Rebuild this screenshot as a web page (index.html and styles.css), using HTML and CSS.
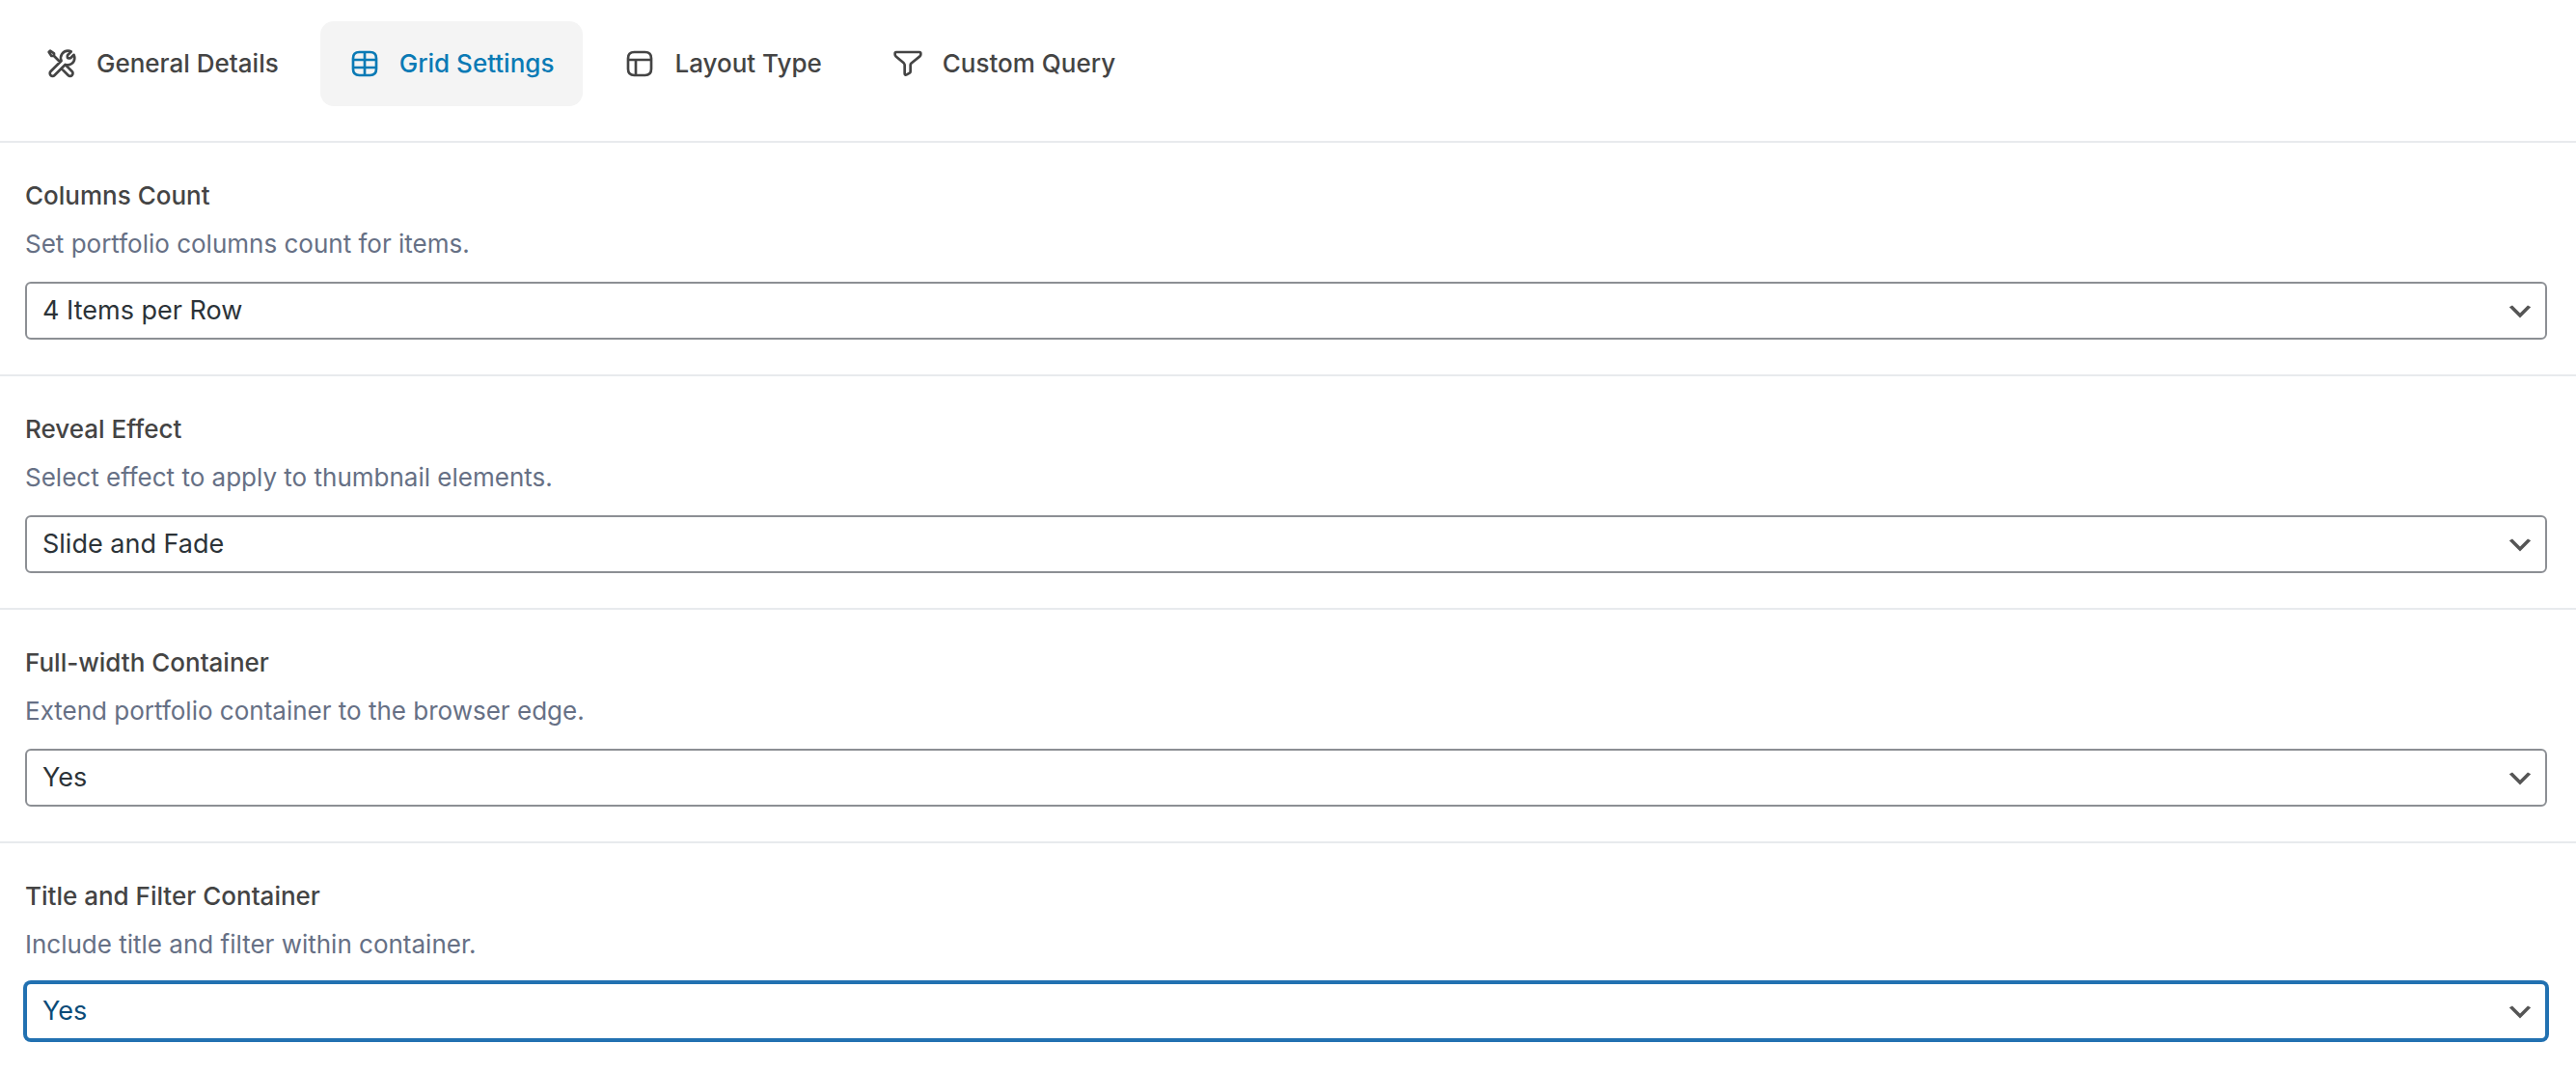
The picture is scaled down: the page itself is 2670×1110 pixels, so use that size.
FILE: index.html
```html
<!DOCTYPE html>
<html lang="en">
<head>
<meta charset="utf-8">
<meta name="viewport" content="width=device-width, initial-scale=1">
<title>Grid Settings</title>
<link rel="stylesheet" href="styles.css">
</head>
<body>
<nav class="tabs" role="tablist">
  <button class="tab" type="button" role="tab" aria-selected="false">
    <svg class="icon" viewBox="0 0 24 24" aria-hidden="true"><path d="M6 6l4.500 4.500M6 6H4L2 3l1-1 3 2v2zM19.300 2.600l-2.600 2.600a1 1 0 0 0-.3.7v.9a1 1 0 0 0 1 1h.9a1 1 0 0 0 .7-.3l2.400-2.400c.3.7.6 1.600.6 2.400a5.500 5.500 0 0 1-7.300 5.200l-8.300 8.300a2.100 2.100 0 0 1-3-3l8.300-8.300A5.500 5.500 0 0 1 16.800 2c.9 0 1.800.2 2.500.6zM12 16l5 5a2.120 2.120 0 0 0 3-3l-5-5"/></svg>
    <span>General Details</span>
  </button>
  <button class="tab active" type="button" role="tab" aria-selected="true">
    <svg class="icon" viewBox="0 0 24 24" aria-hidden="true"><path d="M12 3v18M3 9h18M3 15h18M7.800 3h8.400C19.500 3 21 4.500 21 7.800v8.400c0 3.300-1.500 4.800-4.800 4.800H7.800C4.500 21 3 19.500 3 16.200V7.800C3 4.500 4.500 3 7.800 3z"/></svg>
    <span>Grid Settings</span>
  </button>
  <button class="tab" type="button" role="tab" aria-selected="false">
    <svg class="icon" viewBox="0 0 24 24" aria-hidden="true"><path d="M3 9h18M9 9v12M7.800 3h8.400C19.500 3 21 4.500 21 7.800v8.400c0 3.300-1.500 4.800-4.800 4.800H7.800C4.500 21 3 19.500 3 16.200V7.800C3 4.500 4.500 3 7.800 3z"/></svg>
    <span>Layout Type</span>
  </button>
  <button class="tab" type="button" role="tab" aria-selected="false">
    <svg class="icon" viewBox="0 0 24 24" aria-hidden="true"><path d="M3 3h18c.6 0 1 .4 1 1v.9c0 .6-.2 1-.7 1.400l-6.600 5.300c-.4.4-.7.8-.7 1.400v5.200c0 .5-.2.8-.6 1L11 20.600c-.7.4-1.500 0-1.500-.9V13c0-.5-.3-1.100-.7-1.500L2.700 6.300C2.200 5.900 2 5.500 2 4.900V4c0-.6.4-1 1-1z"/></svg>
    <span>Custom Query</span>
  </button>
</nav>
<main>
  <section class="field">
    <label class="title" for="columns">Columns Count</label>
    <p class="description" id="columns-help">Set portfolio columns count for items.</p>
    <select class="select" id="columns" aria-describedby="columns-help"><option>4 Items per Row</option></select>
  </section>
  <section class="field">
    <label class="title" for="reveal">Reveal Effect</label>
    <p class="description" id="reveal-help">Select effect to apply to thumbnail elements.</p>
    <select class="select" id="reveal" aria-describedby="reveal-help"><option>Slide and Fade</option></select>
  </section>
  <section class="field">
    <label class="title" for="fullwidth">Full-width Container</label>
    <p class="description" id="fullwidth-help">Extend portfolio container to the browser edge.</p>
    <select class="select" id="fullwidth" aria-describedby="fullwidth-help"><option>Yes</option><option>No</option></select>
  </section>
  <section class="field">
    <label class="title" for="filter">Title and Filter Container</label>
    <p class="description" id="filter-help">Include title and filter within container.</p>
    <select class="select focused" id="filter" aria-describedby="filter-help"><option>Yes</option><option>No</option></select>
  </section>
</main>
</body>
</html>
```
FILE: styles.css
```css
* {
  box-sizing: border-box;
}

body {
  margin: 0;
  background: #fff;
  color: #444;
  font-family: Inter, "Liberation Sans", sans-serif;
  font-size: 26px;
  line-height: 34px;
}

.tabs {
  display: flex;
  flex-wrap: wrap;
  gap: 13px;
  padding: 22px 18px 36px;
  border-bottom: 2px solid #e8eaed;
}

.tab {
  display: flex;
  align-items: center;
  gap: 20px;
  height: 88px;
  padding: 0 30px;
  border: 0;
  border-radius: 14px;
  background: transparent;
  color: #444;
  font: inherit;
  font-weight: 550;
  cursor: pointer;
}

.tab.active {
  background: #f4f4f4;
  color: #0a7ab5;
}

.icon {
  width: 32px;
  height: 32px;
  fill: none;
  stroke: currentColor;
  stroke-width: 2;
  stroke-linecap: round;
  stroke-linejoin: round;
}

.field {
  display: flex;
  flex-direction: column;
  padding: 38px 30px 36px 26px;
  border-bottom: 2px solid #e8eaed;
}

.field:last-child {
  border-bottom: 0;
}

.title {
  font-weight: 550;
}

.description {
  margin: 16px 0 22px;
  color: #667085;
}

.select {
  appearance: none;
  width: 100%;
  height: 60px;
  padding: 0 48px 0 16px;
  border: 2px solid #8c8f94;
  border-radius: 6px;
  background: #fff url("data:image/svg+xml,%3Csvg xmlns='http://www.w3.org/2000/svg' viewBox='0 0 20 20'%3E%3Cpath d='M5 6l5 5 5-5 2 1-7 7-7-7 2-1z' fill='%23555'/%3E%3C/svg%3E") no-repeat right 10px top 55% / 32px 32px;
  color: #2c3338;
  font: inherit;
  font-size: 27px;
}

.select.focused {
  border-color: #2271b1;
  box-shadow: 0 0 0 2px #2271b1;
  color: #0a4b78;
  outline: 0;
}
```
